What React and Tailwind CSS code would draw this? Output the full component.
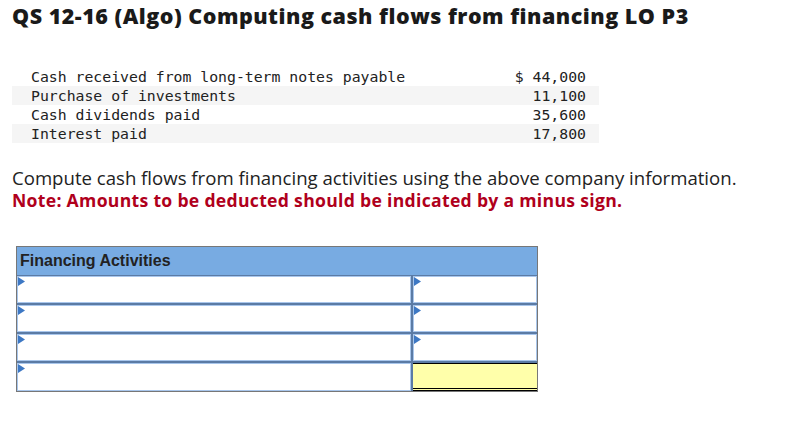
import React from "react";

const givens = [
  { label: "Cash received from long-term notes payable", amount: "$ 44,000" },
  { label: "Purchase of investments", amount: "11,100" },
  { label: "Cash dividends paid", amount: "35,600" },
  { label: "Interest paid", amount: "17,800" },
];

const Marker = () => (
  <svg className="absolute left-0 top-0" width="7" height="9" viewBox="0 0 7 9">
    <polygon points="0,0 7,4.5 0,9" fill="#3d78c4" />
  </svg>
);

const InputCell = ({ className, marker = true }) => (
  <div className={"relative h-full border border-[#a8c6ec] bg-white " + className}>
    {marker && <Marker />}
  </div>
);

export default function App() {
  return (
    <div className="min-h-[421px] w-[810px] bg-white pl-3 pt-[2px]">
      <h1
        className="text-[21.5px] font-extrabold leading-[27px] tracking-[0.5px] text-[#1a1a1a]"
        style={{ fontFamily: "'Open Sans', sans-serif" }}
      >
        QS 12-16 (Algo) Computing cash flows from financing LO P3
      </h1>

      {/* given data */}
      <div
        className="mt-[38px] w-[587px] text-[14.8px] leading-[19px] text-[#222]"
        style={{ fontFamily: "'DejaVu Sans Mono', 'Liberation Mono', monospace" }}
      >
        {givens.map((row, i) => (
          <div key={i} className={"flex justify-between pl-[19px] pr-[13px] " + (i % 2 === 1 ? "bg-[#f5f5f5]" : "")}>
            <span>{row.label}</span>
            <span>{row.amount}</span>
          </div>
        ))}
      </div>

      <div className="mt-[23px]" style={{ fontFamily: "'Open Sans', sans-serif" }}>
        <p className="text-[18.6px] leading-[23px] text-[#222]">
          Compute cash flows from financing activities using the above company information.
        </p>
        <p className="text-[17.6px] font-bold leading-[22px] tracking-[0.3px] text-[#b0001c]">
          Note: Amounts to be deducted should be indicated by a minus sign.
        </p>
      </div>

      {/* answer table */}
      <div
        className="ml-1 mt-[35px] w-[522px] border border-[#777] bg-[#5b7ba5]"
        style={{ fontFamily: "'Liberation Sans', Arial, sans-serif" }}
      >
        <div className="h-[28px] bg-[#78abe2] pl-[3px] pt-[4px] text-[16px] font-bold leading-[19px] text-[#222]">
          Financing Activities
        </div>
        <div className="flex flex-col gap-[2px] pt-[1px]">
          {[0, 1, 2].map((i) => (
            <div key={i} className="flex h-[27px] gap-[2px]">
              <InputCell className="w-[394px]" />
              <InputCell className="flex-1" />
            </div>
          ))}
          <div className="flex h-[28px] gap-[2px]">
            <InputCell className="w-[394px]" />
            <div className="flex-1 border-t border-b-[3px] border-double border-black bg-[#ffffaa]" />
          </div>
        </div>
      </div>
    </div>
  );
}
